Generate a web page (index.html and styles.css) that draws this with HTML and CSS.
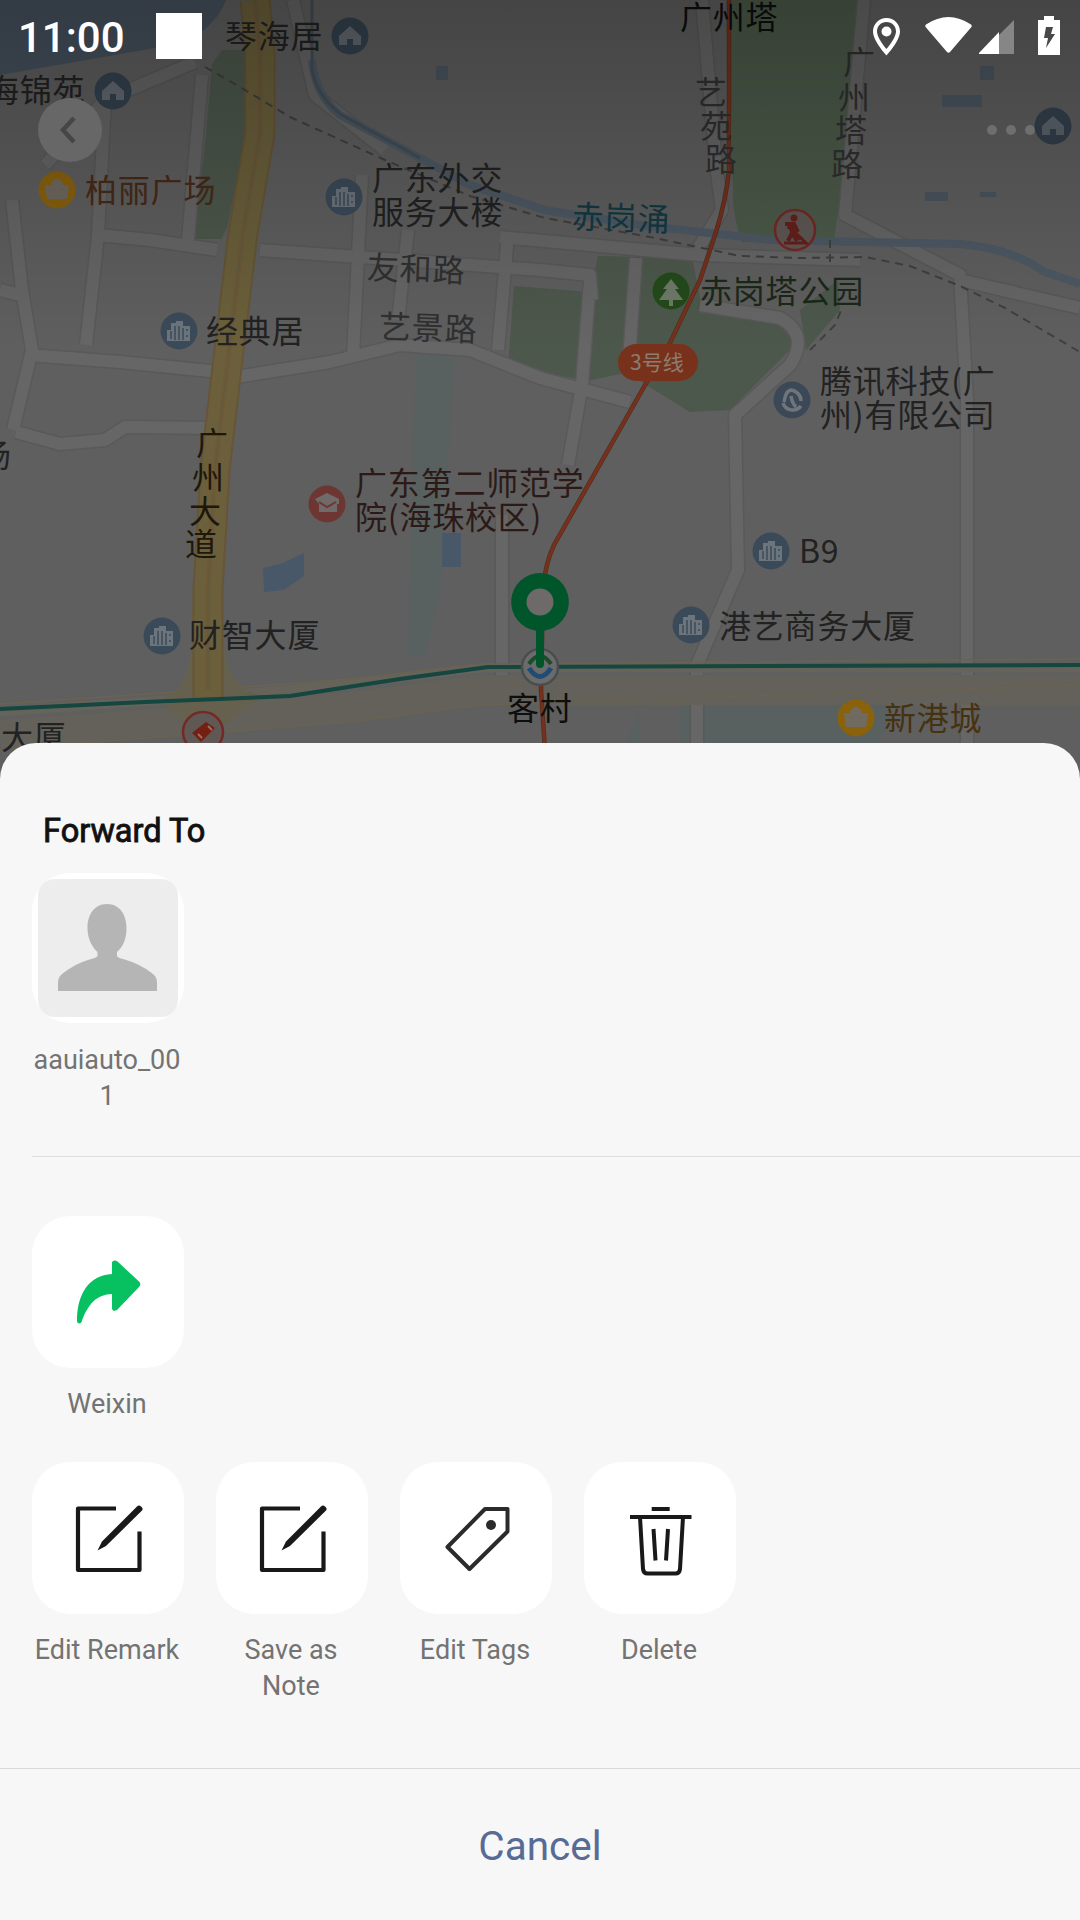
FILE: index.html
```html
<!DOCTYPE html>
<html lang="en">
<head>
<meta charset="utf-8">
<title>Location</title>
<link rel="stylesheet" href="styles.css">
</head>
<body>
<main class="screen">
  <section class="map">
    <svg class="map-canvas" width="1080" height="783" viewBox="0 0 1080 783">
      <defs>
        <linearGradient id="shade" x1="0" y1="0" x2="0" y2="1">
          <stop offset="0" stop-color="#000" stop-opacity=".28"/>
          <stop offset="1" stop-color="#000" stop-opacity="0"/>
        </linearGradient>
        <g id="tower">
          <circle r="18.500" fill="#3b4a59"/>
          <path d="M-12 10V-1h4V-8h5v-2h7v5h7V10z" fill="#6c747c"/>
          <path d="M-8 0v8M-4 -5v14M0 -5v14M4 -3v12M8 -2v2M8 4v2" stroke="#3b4a59" stroke-width="1.500"/>
        </g>
        <g id="home">
          <circle r="18.500" fill="#34424f"/>
          <path d="M0 -10L11 0V9H3V3h-6v6h-8V0z" fill="#636a72"/>
        </g>
        <g id="shop">
          <circle r="18.500" fill="#8a620c"/>
          <path d="M-12 -5h6a6 6 0 0 1 12 0h6L10 9h-20z" fill="#706a60"/>
          <path d="M-5 -1v1M5 -1v1" stroke="#8a6414" stroke-width="3"/>
        </g>
        <path id="roads" d="M12 200L22 290L32 350L13 430M45 165L105 100L195 62M105 100L98 235L86 345M202 75L188 240M0 290L20 295M28 355L120 362L220 372M98 235L150 240L217 250M260 250L345 256L540 270M540 270L590 275L592 300M362 175L353 355M408 230L398 320M508 235L498 350M230 378L330 362L400 345L470 350L540 378L630 402M590 280L582 385L568 465M636 258L628 375M702 0L716 165L722 210L697 250M864 0L845 215L960 275L967 400V743M500 237L700 255L860 260M960 280L1080 308M700 305L780 318Q810 335 790 365L735 415L738 570L697 665V743M502 515V675M16 432L60 444L105 440L125 427L215 428M293 0L315 95L385 150"/>
      </defs>
      <rect width="1080" height="783" fill="#5f5f5f"/>
      <path d="M0 0H226Q213 32 178 44L0 75z" fill="#46525e"/>
      <g fill="#4d584c">
        <path d="M222 50H248L247 130L227 228L221 239H194L206 135L212 64z"/>
        <path d="M729 0H866L861 50L834 240L742 242Q732 215 733 190z" fill="#4c5b4a"/>
        <path d="M598 256L640 257L628 372L588 381L508 366L514 286L590 292z"/>
        <path d="M642 257H692L701 303L778 316Q803 328 790 350L730 410L690 412L630 375z"/>
        <path d="M800 310L838 280L840 310L806 350z"/>
      </g>
      <path d="M416 350H455L440 590L425 655H408zM650 690H680V743H625zM900 690h-260v53h240z" fill="#596160"/>
      <g fill="#485869">
        <path d="M263 568L283 563L304 553V576L284 590L264 592zM442 533H461V567H442z"/>
        <path d="M925 192h23v9h-23zM980 192h16v5h-16zM942 95h40v12h-40zM980 66h14v14h-14zM436 66h12v14h-12z" fill="#4b5560"/>
      </g>

      <use href="#roads" fill="none" stroke="#595959" stroke-width="15" stroke-linejoin="round"/>
      <use href="#roads" fill="none" stroke="#666" stroke-width="12" stroke-linejoin="round"/>

      <g fill="none">
        <path d="M312 60Q315 95 340 115L420 158L470 185L545 210L640 225L770 240L960 244Q1010 248 1045 272L1080 284" stroke="#4d5964" stroke-width="8"/>
        <path d="M312 0V70Q318 98 342 115L420 158" stroke="#444d57" stroke-width="3"/>
        <path d="M0 735L205 720L350 707L480 690H1080" stroke="#636159" stroke-width="30"/>
        <path d="M0 712L205 697L350 684L480 668H1080" stroke="#65635a" stroke-width="9"/>
        <path d="M0 704L205 690L350 679L480 664L1080 659" stroke="#6b6352" stroke-width="1.500"/>
        <path d="M0 750L205 733L350 722L480 705L1080 685" stroke="#6a6252" stroke-width="1.500"/>
        <path d="M160 700Q190 690 192 640V600H224V640Q226 690 262 695L205 740z" fill="#66614e"/>
        <path d="M255 0L260 53V133L243 233L227 367L215 470L208 590V700" stroke="#665637" stroke-width="31"/>
        <path d="M255 0L260 53V133L243 233L227 367L215 470L208 590V700" stroke="#6b603b" stroke-width="27"/>
        <path d="M255 0L260 53V133L243 233L227 367L215 470L208 590V690" stroke="#6f5a38" stroke-width="5"/>
        <path d="M255 0L260 53V133L243 233L227 367L215 470L208 590V690" stroke="#625b40" stroke-width="1.500"/>
        <path d="M205 67L240 87L290 117L385 160L470 196L545 218L650 237L740 256L800 258L865 257L910 266L960 286L1005 308L1080 352M810 350L835 325L842 308M830 240V265" stroke="#404040" stroke-width="2" stroke-dasharray="8 6"/>
        <path d="M729 0V170Q726 200 716 232L700 280L669 345L648 380L554 545Q545 564 543 590L541 690L545 750" stroke="#50301f" stroke-width="4.500"/>
        <path d="M729 0V170Q726 200 716 232L700 280L669 345L648 380L554 545Q545 564 543 590L541 690L545 750" stroke="#78301d" stroke-width="3"/>
        <path d="M0 709L145 702L290 696L400 679L488 667L1080 665" stroke="#15463f" stroke-width="4"/>
      </g>

      <rect x="618" y="344" width="80" height="37" rx="18.500" fill="#78321b"/>
      <use href="#home" x="350" y="36"/>
      <use href="#home" x="113" y="91"/>
      <use href="#shop" x="57" y="190"/>
      <use href="#shop" x="856" y="718"/>
      <use href="#tower" x="344" y="197"/>
      <use href="#tower" x="179" y="331"/>
      <use href="#tower" x="771" y="551"/>
      <use href="#tower" x="691" y="625"/>
      <use href="#tower" x="162" y="636"/>
      <circle cx="792" cy="400" r="18.500" fill="#3a4857"/>
      <path d="M792 390c-6 0-7 7-8 12M792 390c6 2 9 6 9 11M783 403c2 7 12 10 18 3M791 396q1 7 5 11" fill="none" stroke="#6f757b" stroke-width="3.500"/>
      <circle cx="327" cy="504" r="18.500" fill="#6d3633"/>
      <path d="M315 499l12-6 12 6v5h-2v8h-18v-8z" fill="#706b69"/>
      <path d="M319 502l8 5 9-5" fill="none" stroke="#6d3633" stroke-width="2"/>
      <circle cx="671" cy="291" r="18.500" fill="#234b1b"/>
      <path d="M671 279l8 10h-4l8 11h-10v6h-4v-6h-10l8-11h-4z" fill="#6f7a69"/>
      <g fill="#5f5855" stroke="#752824" stroke-width="2.500">
        <circle cx="795" cy="230" r="20"/>
        <circle cx="203" cy="732" r="20"/>
      </g>
      <g fill="none" stroke="#65201c" stroke-width="3">
        <circle cx="794" cy="218" r="2" fill="#65201c"/>
        <path d="M785 224l9 0 4 8M792 225v8l-4 8M792 233l5 8M788 226l13 13" stroke-width="4"/>
        <path d="M784 243h22l-6-6"/>
      </g>
      <path d="M192 733l14-11 9 6-14 14z" fill="#741f12"/>
      <path d="M198 734l4 4M208 726l4 4" stroke="#8d7465" stroke-width="2"/>

      <g class="poi" dominant-baseline="central">
        <text x="225" y="34">琴海居</text>
        <text x="-13" y="88">海锦苑</text>
        <text class="poi-shop" x="85" y="188">柏丽广场</text>
        <text x="372" y="176">广东外交</text>
        <text x="372" y="210">服务大楼</text>
        <text class="poi-road" x="367" y="265" transform="rotate(2 368 267)">友和路</text>
        <text class="poi-road" x="379" y="324" transform="rotate(2 380 326)">艺景路</text>
        <text x="206" y="329">经典居</text>
        <text class="poi-place" x="680" y="15">广州塔</text>
        <text class="poi-road" x="695" y="90">艺</text>
        <text class="poi-road" x="700" y="124">苑</text>
        <text class="poi-road" x="705" y="157">路</text>
        <text class="poi-road" x="843" y="60">广</text>
        <text class="poi-road" x="838" y="95">州</text>
        <text class="poi-road" x="835" y="128">塔</text>
        <text class="poi-road" x="831" y="162">路</text>
        <text class="poi-water" x="572" y="214" transform="rotate(2 573 216)">赤岗涌</text>
        <text class="poi-park" x="700" y="289">赤岗塔公园</text>
        <text x="820" y="379">腾讯科技(广</text>
        <text x="820" y="413">州)有限公司</text>
        <text x="799" y="549">B9</text>
        <text x="719" y="624">港艺商务大厦</text>
        <text class="poi-mall" x="884" y="716">新港城</text>
        <text class="poi-school" x="355" y="481">广东第二师范学</text>
        <text class="poi-school" x="355" y="515">院(海珠校区)</text>
        <text class="poi-avenue" x="196" y="441">广</text>
        <text class="poi-avenue" x="192" y="475">州</text>
        <text class="poi-avenue" x="189" y="509">大</text>
        <text class="poi-avenue" x="185" y="542">道</text>
        <text x="189" y="633">财智大厦</text>
        <text x="1" y="735">大厦</text>
        <text x="-21" y="453">场</text>
        <text class="poi-place" x="507" y="706">客村</text>
        <text class="poi-line" x="630" y="361">3号线</text>
      </g>
      <circle cx="540" cy="667" r="18" fill="#6b6b6b" stroke="#4a4d50" stroke-width="2.500"/>
      <path d="M529 668q11 17 22 0" fill="none" stroke="#204b75" stroke-width="5"/>
      <path d="M529 664q11-16 22 0" fill="none" stroke="#194d2c" stroke-width="4"/>
      <path d="M540 573a29 29 0 0 1 4 57.700V664a4 4 0 0 1-8 0V630.700A29 29 0 0 1 540 573z" fill="#00562a"/>
      <circle cx="540" cy="602" r="13.500" fill="#6e6a6a"/>
      <rect width="1080" height="350" fill="url(#shade)"/>
      <circle cx="70" cy="130" r="32" fill="#676767"/>
      <path d="M74 118L63 130L74 142" fill="none" stroke="#464646" stroke-width="4.500"/>
      <g fill="#6e6e6e"><circle cx="992" cy="130" r="5"/><circle cx="1011" cy="130" r="5"/><circle cx="1030" cy="130" r="5"/></g>
      <circle cx="1053" cy="126" r="18.500" fill="#2b353f"/>
      <path d="M1053 116l11 10v9h-8v-6h-6v6h-8v-9z" fill="#4b525a"/>
    </svg>
    <header class="status">
      <span class="clock">11:00</span>
      <span class="notice"></span>
      <svg class="status-icons" width="192" height="44" viewBox="870 14 192 44">
        <path fill-rule="evenodd" fill="#fff" d="M886.500 18C879 18 873 24 873 31.500C873 41 886.500 55.500 886.500 55.500S900 41 900 31.500C900 24 894 18 886.500 18zM886.500 22C892 22 896 26 896 31.500C896 38 886.500 49 886.500 49S877 38 877 31.500C877 26 881 22 886.500 22zM886.500 26.500a5 5 0 1 1 0 10 5 5 0 0 1 0-10z"/>
        <path fill="#fff" d="M926 24.500Q948.500 9.500 971 24.500Q972.500 26 971 27.500L950 52q-1.500 1.500-3 0L926 27.500Q924.500 26 926 24.500z"/>
        <path fill="#868686" d="M999 35L1014 20V54H999z"/>
        <path fill="#fff" d="M979 54V53L999 32V54z"/>
        <path fill="#fff" d="M1044 16h10v4h6v35h-22V20h6z"/>
        <path fill="#484848" d="M1046 27h7l-2 7h4l-9 14 2-10h-4z"/>
      </svg>
    </header>
  </section>

  <section class="sheet">
    <h1 class="sheet-title">Forward To</h1>
    <ul class="row row-contacts">
      <li class="item">
        <span class="tile tile-avatar">
          <svg width="140" height="138" viewBox="0 0 140 138">
            <rect width="140" height="138" rx="17" fill="#ededed"/>
            <path d="M69 25C56 25 49.500 36 49.500 49C49.500 60 54 68 59.500 73V77Q58 79 53 80Q36 85 24 95Q20 98 20 104V112H119V104Q119 98 115 95Q103 85 85 80Q80 79 79 77V73C85 68 88.500 60 88.500 49C88.500 36 82 25 69 25z" fill="#b5b5b5"/>
          </svg>
        </span>
        <span class="label">aauiauto_00<br>1</span>
      </li>
    </ul>
    <hr class="rule">
    <ul class="row row-share">
      <li class="item">
        <span class="tile">
          <svg width="152" height="152" viewBox="0 0 152 152">
            <path fill="#07c160" d="M80 58V47c0-2.500 3-3.500 5.500-1.500l21.500 20c1.700 1.700 1.700 3.700 0 5.400l-21.500 22.500c-2.500 2.300-5.500 1.500-5.500-1.500V78C65 78.500 56 87.500 49.500 106c-1 2.300-4.500 1.700-4.500-1C45 77.500 57 59.500 80 58z"/>
          </svg>
        </span>
        <span class="label">Weixin</span>
      </li>
    </ul>
    <ul class="row row-actions">
      <li class="item">
        <span class="tile">
          <svg width="152" height="152" viewBox="0 0 152 152">
            <path d="M84 46.500H46V108H107.500V69.500" fill="none" stroke="#191919" stroke-width="4.200" stroke-linejoin="round"/>
            <path d="M65.500 88.500L70 79.500L105 44.500Q107 42.500 109 44.500L110 45.500Q111.500 47 109.500 49L74 84z" fill="#191919"/>
          </svg>
        </span>
        <span class="label">Edit Remark</span>
      </li>
      <li class="item">
        <span class="tile">
          <svg width="152" height="152" viewBox="0 0 152 152">
            <path d="M84 46.500H46V108H107.500V69.500" fill="none" stroke="#191919" stroke-width="4.200" stroke-linejoin="round"/>
            <path d="M65.500 88.500L70 79.500L105 44.500Q107 42.500 109 44.500L110 45.500Q111.500 47 109.500 49L74 84z" fill="#191919"/>
          </svg>
        </span>
        <span class="label">Save as<br>Note</span>
      </li>
      <li class="item">
        <span class="tile">
          <svg width="152" height="152" viewBox="0 0 152 152">
            <path d="M85 47H107.500V69.500L69.500 107L47.500 85z" fill="none" stroke="#2b2b2b" stroke-width="4" stroke-linejoin="round"/>
            <circle cx="91" cy="63" r="5" fill="#2b2b2b"/>
          </svg>
        </span>
        <span class="label">Edit Tags</span>
      </li>
      <li class="item">
        <span class="tile">
          <svg width="152" height="152" viewBox="0 0 152 152">
            <g fill="none" stroke="#191919" stroke-width="4">
              <path d="M67.700 47H85.700M46 55H107.500M56 55L59 107Q59.500 111.500 63.500 111.500H91.500Q95.500 111.500 96 107L99 55M69.500 67L71.500 98.500M84 67L82 98.500"/>
            </g>
          </svg>
        </span>
        <span class="label">Delete</span>
      </li>
    </ul>
    <button class="cancel" type="button">Cancel</button>
  </section>
</main>
</body>
</html>
```
FILE: styles.css
```css
* {
  box-sizing: border-box;
}

body {
  margin: 0;
  background: #606060;
  font-family: Roboto, "Noto Sans CJK SC", sans-serif;
}

.screen {
  display: flex;
  flex-direction: column;
  width: 1080px;
  height: 1920px;
  overflow: hidden;
}

.map {
  position: relative;
  flex: none;
  height: 783px;
}

.map-canvas {
  display: block;
}

.poi {
  font-family: "Noto Sans CJK SC", sans-serif;
  font-size: 32px;
  letter-spacing: 0.8px;
  fill: #222;
}

.poi-shop { fill: #482a17; }
.poi-mall { fill: #463211; }
.poi-road { fill: #303030; }
.poi-water { fill: #123943; }
.poi-park { fill: #1b2818; }
.poi-school { fill: #2b1a17; }
.poi-place { fill: #0e0e0e; }
.poi-avenue { fill: #1e180b; }

.poi-line {
  font-size: 21px;
  letter-spacing: 0;
  fill: #8c7d71;
}

.status {
  position: absolute;
  inset: 0 0 auto;
  display: flex;
  align-items: center;
  height: 72px;
  padding: 0 18px;
  color: #fff;
}

.clock {
  width: 138px;
  font-size: 42px;
  font-weight: 500;
  line-height: 72px;
  padding-top: 4px;
}

.notice {
  width: 46px;
  height: 46px;
  background: #fff;
}

.status-icons {
  margin-left: auto;
}

.sheet {
  display: flex;
  flex-direction: column;
  flex: 1;
  position: relative;
  margin-top: -40px;
  border-radius: 36px 36px 0 0;
  background: #f7f7f7;
}

.sheet-title {
  margin: 69px 0 0 43px;
  height: 61px;
  font-size: 32.500px;
  font-weight: 400;
  line-height: 38px;
  color: #111;
  -webkit-text-stroke: 0.9px #111;
}

.row {
  display: flex;
  gap: 32px;
  margin: 0;
  padding: 0 0 0 32px;
  list-style: none;
}

.row-contacts { height: 283px; }
.row-share { height: 246px; margin-top: 59px; }
.row-actions { height: 306px; }

.item {
  display: flex;
  flex-direction: column;
  align-items: center;
  width: 152px;
}

.tile {
  display: flex;
  align-items: center;
  justify-content: center;
  width: 152px;
  height: 152px;
  border-radius: 38px;
  background: #fff;
}

.tile-avatar {
  height: 150px;
  border-radius: 38px;
}

.row-contacts .label {
  margin-top: 19px;
}

.label {
  margin-top: 18px;
  padding-right: 2px;
  font-size: 27px;
  line-height: 36px;
  text-align: center;
  white-space: nowrap;
  color: #737373;
}

.rule {
  width: 1048px;
  height: 1px;
  margin: 0 0 0 32px;
  border: 0;
  background: #dedede;
}

.cancel {
  flex: 1;
  border: 0;
  border-top: 1px solid #dadada;
  padding: 3px 0 0;
  background: none;
  font: 40.500px Roboto, sans-serif;
  color: #576b95;
}
```
